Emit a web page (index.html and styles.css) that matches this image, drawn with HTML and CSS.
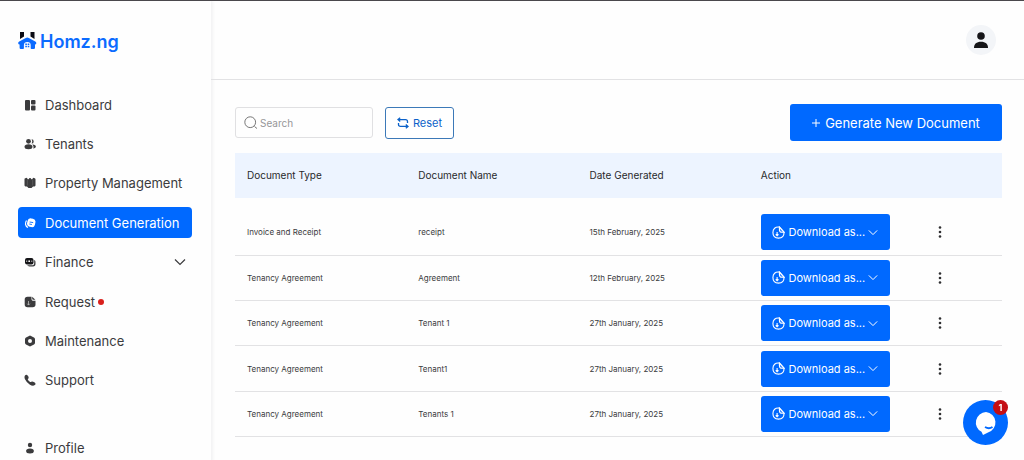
FILE: index.html
```html
<!DOCTYPE html>
<html lang="en">
<head>
<meta charset="utf-8">
<meta name="viewport" content="width=device-width, initial-scale=1">
<title>Homz.ng - Document Generation</title>
<link rel="stylesheet" href="styles.css">
</head>
<body>
<!-- shared icons -->
<svg class="symbols" aria-hidden="true">
	<symbol id="chevron" viewBox="0 0 12 8"><path d="M1 1.5l5 5 5-5" fill="none" stroke="currentColor" stroke-width="1.2"/></symbol>
	<symbol id="download" viewBox="0 0 14 14">
		<path d="M8 1.200C3.500.6 1 3 1 7s2.200 6 6 6 6-2.300 6-6.300z" fill="none" stroke="currentColor" stroke-width="1.200"/>
		<path d="M8 1.200v2.500c0 2 .8 3 2.800 3H13z" fill="none" stroke="currentColor" stroke-width="1.200"/>
		<path d="M5.500 6.500v4M4 9l1.500 1.500L7 9" fill="none" stroke="currentColor" stroke-width="1.200"/>
	</symbol>
	<symbol id="dots" viewBox="0 0 4 14"><circle cx="2" cy="2.500" r="1.300"/><circle cx="2" cy="7" r="1.300"/><circle cx="2" cy="11.500" r="1.300"/></symbol>
</svg>

<div class="page">
	<aside class="sidebar">
		<a href="#" class="logo">
			<svg width="19" height="18" viewBox="0 0 19 18" aria-hidden="true">
				<path d="M2 0h4v4.500L2 7zM12.500 0h4v7l-4-2.500z" fill="#0b0b14"/>
				<path d="M9.300 5.500q.8 0 1.500.4l6.500 3.600q1.200.7 1 2.100-.2 1-1.300 1v3.200q0 1.200-1.200 1.200h-2.300q-.8 0-.8-.8V13q0-3-3.400-3t-3.400 3v3.200q0 .8-.8.8H2.800q-1.200 0-1.200-1.200v-3.200q-1.200 0-1.400-1-.2-1.500 1-2.100l6.600-3.600q.7-.4 1.500-.4z" fill="#0b6bff"/>
				<path d="M7.300 11.500h1.600V13H7.300zM9.700 11.500h1.600V13H9.700zM7.300 13.800h1.600v1.500H7.300zM9.700 13.800h1.600v1.500H9.700z" fill="#0b6bff"/>
			</svg>
			<span>Homz.ng</span>
		</a>
		<nav class="nav">
			<ul class="navList">
				<li><a href="#" class="navItem">
					<svg viewBox="0 0 12 12"><rect x="1" y="1" width="5" height="10.500" rx="1"/><rect x="7" y="1" width="4.500" height="4.500" rx="1"/><rect x="7" y="6.500" width="4.500" height="5" rx="1"/></svg>
					<span>Dashboard</span></a></li>
				<li><a href="#" class="navItem">
					<svg viewBox="0 0 12 12"><circle cx="4.500" cy="3.300" r="2.400"/><ellipse cx="4.500" cy="8.700" rx="4" ry="2.500"/><path d="M7.500 1.200a2.200 2.200 0 0 1 0 4.400 4 4 0 0 0 0-4.400zM8.300 6.500c4.600-.2 4.600 4.100.8 4 .8-1.400.5-2.900-.8-4z"/></svg>
					<span>Tenants</span></a></li>
				<li><a href="#" class="navItem">
					<svg viewBox="0 0 12 12"><path d="M1.200 1.200L3 .7l.6 1.500h1L5.500 1h1l.9 1.200h1L9 .7l1.800.5q.7.300.7 1v6q0 1-1 1.200H9L7.500 11h-3L3 9.400H1.500q-1-.2-1-1.200v-6q0-.8.700-1z"/><path d="M3.300 3v5.500M8.700 3v5.500" stroke="#777" stroke-width=".5"/></svg>
					<span>Property Management</span></a></li>
				<li><a href="#" class="navItem active" aria-current="page">
					<svg viewBox="0 0 12 12"><rect x="3.200" y="1.500" width="8" height="8.500" rx="3.200" transform="rotate(12 7 6)"/><path d="M2.500 3.500C.9 6 1 9 4 10.500" fill="none" stroke="currentColor" stroke-width="1.200"/><path d="M5.600 5l3.600.6M5.300 7l2.600.5" stroke="#0069ff" stroke-width=".9"/></svg>
					<span>Document Generation</span></a></li>
				<li><a href="#" class="navItem">
					<svg viewBox="0 0 12 12"><rect x="1" y="2" width="8.500" height="6.500" rx="2" fill="#151518"/><path d="M10.200 4c1.500.6 1.300 1.500 1.300 3.800 0 2-.7 2.700-2.500 2.700H5.500C4.300 10.500 3.600 10 3.300 9.300H8c1.600 0 2.200-.8 2.200-2.300z"/><circle cx="5.200" cy="5.200" r=".9" fill="#fff"/><path d="M2.700 4.500v1.500M7.800 4.500v1.500" stroke="#fff" stroke-width=".7"/></svg>
					<span>Finance</span>
					<svg class="arrow" viewBox="0 0 12 8"><use href="#chevron"/></svg></a></li>
				<li><a href="#" class="navItem">
					<svg viewBox="0 0 12 12"><path d="M3.500.7h4v2c0 1.400.6 2 2 2h2v3.800q0 2.800-2.800 2.800H3.500Q.7 11.300.7 8.500v-5Q.7.700 3.500.7z"/><path d="M8.200.8l3.200 3H9.300q-1.100 0-1.100-1.100z"/><path d="M4.500 5v4M3.300 7.700l1.200 1.400 1.300-1.400" fill="none" stroke="#bbb" stroke-width=".8"/></svg>
					<span>Request</span><i class="redDot"></i></a></li>
				<li><a href="#" class="navItem">
					<svg viewBox="0 0 12 12"><path fill-rule="evenodd" d="M5 .9q1-.6 2 0l3 1.700q1 .6 1 1.700v3.400q0 1.100-1 1.700l-3 1.700q-1 .6-2 0L2 9.400Q1 8.800 1 7.700V4.300q0-1.100 1-1.700zM6 4a2 2 0 1 0 0 4 2 2 0 0 0 0-4z"/></svg>
					<span>Maintenance</span></a></li>
				<li><a href="#" class="navItem">
					<svg viewBox="0 0 12 12"><path d="M1 1.500Q2.500-.2 4 2q1.200 1.700.2 2.700-.7.700 0 1.500l1.600 1.600q.6.500 1.500-.1 1-.8 3 .6 2.200 1.500.5 2.800-2 1.400-5.200-.6Q2.400 8.200 1 5.200 0 2.900 1 1.500z"/></svg>
					<span>Support</span></a></li>
			</ul>
			<a href="#" class="navItem">
				<svg viewBox="0 0 12 12"><circle cx="6" cy="3" r="2.200"/><ellipse cx="6" cy="9" rx="3.900" ry="2.500"/></svg>
				<span>Profile</span></a>
		</nav>
	</aside>

	<div class="content">
		<header class="topbar">
			<button type="button" class="avatar" aria-label="Account">
				<svg width="14" height="16" viewBox="0 0 14 16"><circle cx="7" cy="4" r="3.800"/><path d="M0 16c0-4 2.500-6.200 7-6.200s7 2.200 7 6.200z"/></svg>
			</button>
		</header>
		<main class="main">
			<div class="toolbar">
				<label class="search">
					<svg width="14" height="14" viewBox="0 0 14 14" fill="none" stroke="#777"><circle cx="6.200" cy="6.200" r="5.400"/><path d="M10.500 10.500l2.500 2"/></svg>
					<input type="search" placeholder="Search" aria-label="Search">
				</label>
				<button type="button" class="btn reset">
					<svg width="12" height="12" viewBox="0 0 12 12" fill="none" stroke="currentColor" stroke-width="1.300"><path d="M3.200.8L1 2.600l2.200 1.800M1 2.600h7.500q2 0 2 2V6M8.800 7.600L11 9.400l-2.200 1.800M11 9.400H3.500q-2 0-2-2V6"/></svg>
					Reset
				</button>
				<button type="button" class="btn generate">
					<svg width="8" height="8" viewBox="0 0 8 8" stroke="currentColor"><path d="M4 0v8M0 4h8"/></svg>
					Generate New Document
				</button>
			</div>
			<table class="docTable">
				<thead>
					<tr><th>Document Type</th><th>Document Name</th><th>Date Generated</th><th>Action</th><th></th></tr>
				</thead>
				<tbody>
					<tr>
						<td>Invoice and Receipt</td><td>receipt</td><td>15th February, 2025</td>
						<td><button type="button" class="btn download"><svg width="13" height="13"><use href="#download"/></svg>Download as...<svg width="10" height="7"><use href="#chevron"/></svg></button></td>
						<td><button type="button" class="more" aria-label="More"><svg width="4" height="14"><use href="#dots"/></svg></button></td>
					</tr>
					<tr>
						<td>Tenancy Agreement</td><td>Agreement</td><td>12th February, 2025</td>
						<td><button type="button" class="btn download"><svg width="13" height="13"><use href="#download"/></svg>Download as...<svg width="10" height="7"><use href="#chevron"/></svg></button></td>
						<td><button type="button" class="more" aria-label="More"><svg width="4" height="14"><use href="#dots"/></svg></button></td>
					</tr>
					<tr>
						<td>Tenancy Agreement</td><td>Tenant 1</td><td>27th January, 2025</td>
						<td><button type="button" class="btn download"><svg width="13" height="13"><use href="#download"/></svg>Download as...<svg width="10" height="7"><use href="#chevron"/></svg></button></td>
						<td><button type="button" class="more" aria-label="More"><svg width="4" height="14"><use href="#dots"/></svg></button></td>
					</tr>
					<tr>
						<td>Tenancy Agreement</td><td>Tenant1</td><td>27th January, 2025</td>
						<td><button type="button" class="btn download"><svg width="13" height="13"><use href="#download"/></svg>Download as...<svg width="10" height="7"><use href="#chevron"/></svg></button></td>
						<td><button type="button" class="more" aria-label="More"><svg width="4" height="14"><use href="#dots"/></svg></button></td>
					</tr>
					<tr>
						<td>Tenancy Agreement</td><td>Tenants 1</td><td>27th January, 2025</td>
						<td><button type="button" class="btn download"><svg width="13" height="13"><use href="#download"/></svg>Download as...<svg width="10" height="7"><use href="#chevron"/></svg></button></td>
						<td><button type="button" class="more" aria-label="More"><svg width="4" height="14"><use href="#dots"/></svg></button></td>
					</tr>
				</tbody>
			</table>
		</main>
	</div>
</div>

<button type="button" class="chat" aria-label="Open chat">
	<svg width="24" height="24" viewBox="0 0 24 24"><path d="M12 1a10.500 10.500 0 0 1 2 20.500L9 24l-1.500-3.200A10.500 10.500 0 0 1 12 1z" fill="#fff"/><path d="M11 16q4 2.500 7.500 0" fill="none" stroke="#0069ff" stroke-width="1.800"/></svg>
	<span class="badge">1</span>
</button>
</body>
</html>
```
FILE: styles.css
```css
* {
	box-sizing: border-box;
}
body {
	margin: 0;
	overflow: hidden;
	background-color: #fefefe;
	border-top: 1px solid #4a484c;
	font-family: Inter, "Liberation Sans", sans-serif;
	color: #3b3b3d;
}
button, input {
	font-family: inherit;
}
button {
	cursor: pointer;
}
.symbols {
	display: none;
}
.page {
	display: flex;
	min-height: calc(100vh - 1px);
}

/* sidebar */
.sidebar {
	flex: 0 0 211px;
	padding: 29px 19px 0 18px;
	box-shadow: 1px 0 4px #ececee;
}
.logo {
	display: flex;
	align-items: center;
	gap: 3px;
	height: 22px;
	color: #0b6bff;
	font-size: 18px;
	font-weight: 600;
	text-decoration: none;
}
.nav {
	margin-top: 37px;
}
.navList {
	display: flex;
	flex-direction: column;
	justify-content: space-between;
	height: 307px;
	margin: 0 0 36px;
	padding: 0;
	list-style: none;
}
.navItem {
	display: flex;
	align-items: center;
	gap: 9px;
	height: 31px;
	padding: 0 6px;
	border-radius: 4px;
	color: #3b3b3d;
	font-size: 13px;
	text-decoration: none;
	white-space: nowrap;
}
.navItem svg {
	flex: none;
	width: 12px;
	height: 12px;
	fill: currentColor;
}
.navItem .arrow {
	height: 8px;
	margin-left: auto;
}
.active {
	background-color: #0069ff;
	color: #fff;
}
.redDot {
	width: 6px;
	height: 6px;
	margin-left: -6px;
	border-radius: 50%;
	background-color: #d9201c;
}

/* right side */
.content {
	flex: 1;
	min-width: 0;
}
.topbar {
	display: flex;
	align-items: center;
	justify-content: flex-end;
	height: 79px;
	padding: 0 28px;
	border-bottom: 1px solid #e2e2e4;
}
.avatar {
	display: flex;
	align-items: center;
	justify-content: center;
	width: 30px;
	height: 30px;
	padding: 0;
	border: 0;
	border-radius: 50%;
	background-color: #f3f5f8;
	fill: #151518;
}
.main {
	padding: 24px 22px 22px 24px;
}
.toolbar {
	display: flex;
	align-items: center;
	gap: 12px;
	margin-bottom: 12px;
}
.search {
	display: flex;
	align-items: center;
	gap: 2px;
	width: 138px;
	height: 31px;
	padding: 0 8px;
	border: 1px solid #e0e0e2;
	border-radius: 3px;
}
.search svg {
	flex: none;
}
.search input {
	width: 100%;
	min-width: 0;
	padding: 0;
	border: 0;
	outline: 0;
	background: none;
	font-size: 10px;
}
.search input::placeholder {
	color: #969698;
}
.btn {
	display: flex;
	align-items: center;
	justify-content: center;
	padding: 0;
	border: 0;
	border-radius: 3px;
	background-color: #0069ff;
	color: #fff;
	font-size: 11px;
	white-space: nowrap;
}
.reset {
	gap: 4px;
	width: 69px;
	height: 32px;
	border: 1px solid #3c79b8;
	background-color: #fff;
	color: #0c62c9;
}
.generate {
	gap: 5px;
	width: 212px;
	height: 37px;
	margin-left: auto;
	font-size: 13px;
}

/* documents */
.docTable {
	width: 100%;
	height: 284px;
	table-layout: fixed;
	border-collapse: collapse;
	text-align: left;
}
.docTable th {
	width: 22.33%;
	height: 45px;
	padding: 0 0 2px 12px;
	background-color: #edf4ff;
	color: #29292b;
	font-size: 10px;
	font-weight: 400;
}
.docTable th:last-child {
	width: auto;
}
.docTable tbody::before {
	content: "";
	display: table-row;
	height: 12px;
}
.docTable td {
	height: 45px;
	padding: 0 0 0 12px;
	border-bottom: 1px solid #e2e2e4;
	color: #3b3b3d;
	font-size: 8px;
}
.download {
	gap: 3px;
	width: 129px;
	height: 36px;
}
.more {
	display: flex;
	justify-content: center;
	width: 15px;
	padding: 0;
	border: 0;
	background: none;
	fill: #2e2e30;
}

/* chat bubble stays over the page */
.chat {
	position: fixed;
	right: 16px;
	bottom: 15px;
	display: flex;
	align-items: center;
	justify-content: center;
	width: 45px;
	height: 45px;
	padding: 0;
	border: 0;
	border-radius: 50%;
	background-color: #0069ff;
}
.badge {
	position: absolute;
	top: 0;
	right: 0;
	width: 15px;
	height: 15px;
	border-radius: 50%;
	background-color: #c40e14;
	color: #fff;
	font-size: 9px;
	font-weight: 700;
	line-height: 15px;
	text-align: center;
}
```
